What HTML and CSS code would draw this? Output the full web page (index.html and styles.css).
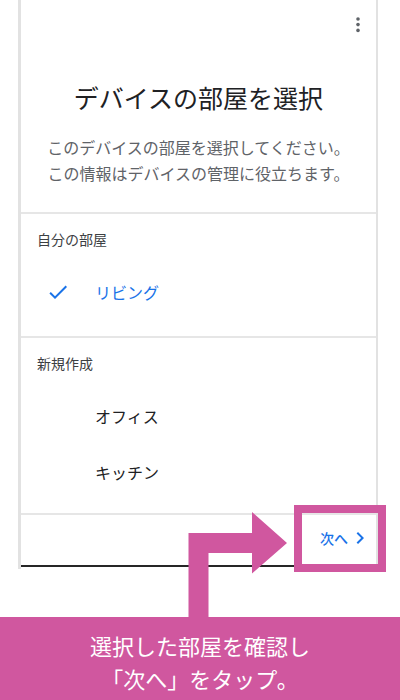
FILE: index.html
```html
<!DOCTYPE html>
<html lang="ja">
<head>
<meta charset="utf-8">
<link rel="stylesheet" href="styles.css">
</head>
<body>
<div class="frame">
  <header class="head">
    <div class="topbar">
      <svg class="kebab" width="6" height="18" viewBox="0 0 6 18"><circle cx="3" cy="3" r="1.8"/><circle cx="3" cy="8.6" r="1.8"/><circle cx="3" cy="14.4" r="1.8"/></svg>
    </div>
    <h1 class="title">デバイスの部屋を選択</h1>
    <p class="desc">このデバイスの部屋を選択してください。<br>この情報はデバイスの管理に役立ちます。</p>
  </header>
  <section class="group g1">
    <div class="label">自分の部屋</div>
    <div class="row selected">
      <svg class="check" width="24" height="24" viewBox="0 0 24 24"><path d="M9 16.17L4.83 12l-1.42 1.41L9 19 21 7l-1.41-1.41z"/></svg>
      <span>リビング</span>
    </div>
  </section>
  <section class="group g2">
    <div class="label">新規作成</div>
    <div class="row"><span class="item">オフィス</span></div>
    <div class="row"><span class="item">キッチン</span></div>
  </section>
  <footer class="foot">
    <span class="next">次へ<svg class="chev" width="24" height="24" viewBox="0 0 24 24"><path d="M10 6L8.59 7.41 13.17 12l-4.58 4.59L10 18l6-6z"/></svg></span>
  </footer>
</div>
<div class="note">選択した部屋を確認し<br>「次へ」をタップ。</div>
<svg class="arrow" width="110" height="120" viewBox="0 0 110 120"><polygon points="8.5,120 8.5,33 72,33 72,12 107,43 72,73.5 72,53 28.5,53 28.5,120"/></svg>
<div class="hl"></div>
</body>
</html>
```
FILE: styles.css
```css
* { box-sizing: border-box; }
html, body { margin: 0; padding: 0; }
body {
  width: 400px;
  height: 700px;
  overflow: hidden;
  position: relative;
  background: #fff;
  font-family: "Noto Sans CJK JP", "Noto Sans", sans-serif;
  color: #202124;
}
.frame {
  margin-left: 18px;
  width: 360px;
  border-left: 3px solid #e2e2e2;
  border-right: 2px solid #e2e2e2;
  padding-bottom: 2px;
}
.head {
  display: flex;
  flex-direction: column;
  align-items: center;
  height: 212px;
}
.topbar {
  align-self: stretch;
  display: flex;
  justify-content: flex-end;
  padding: 16px 15px 0 0;
  height: 34px;
}
.kebab { fill: #5f6368; }
.title {
  margin: 46px 0 0;
  font-size: 25px;
  line-height: 34px;
  font-weight: 400;
  color: #202124;
}
.desc {
  margin: 20px 0 0;
  font-size: 16px;
  line-height: 26px;
  text-align: center;
  color: #5f6368;
}
.group {
  border-top: 2px solid #e6e6e6;
  padding-top: 15px;
}
.g1 { padding-bottom: 16px; }
.g2 { padding-bottom: 13px; }
.label {
  padding-left: 16px;
  font-size: 14px;
  line-height: 20px;
  color: #3c4043;
  margin-bottom: 15px;
}
.row {
  height: 56px;
  display: flex;
  align-items: center;
  padding-left: 74px;
  font-size: 16px;
  color: #202124;
}
.row.selected {
  padding-left: 25px;
  gap: 25px;
  color: #1a73e8;
}
.check { fill: #1a73e8; }
.foot {
  border-top: 2px solid #e6e6e6;
  border-bottom: 2px solid #262626;
  height: 54px;
  display: flex;
  justify-content: flex-end;
  align-items: center;
  padding: 0 4px 4px 0;
}
.next {
  display: flex;
  align-items: center;
  font-size: 14px;
  font-weight: 500;
  color: #1a73e8;
}
.chev { fill: #1a73e8; }
.note {
  margin-top: 48px;
  height: 83px;
  background: #d0579f;
  color: #fff;
  font-size: 22px;
  line-height: 33px;
  text-align: center;
  padding-top: 12px;
}
.arrow {
  position: absolute;
  left: 180px;
  top: 500px;
  fill: #d0579f;
}
.hl {
  position: absolute;
  left: 294px;
  top: 505px;
  width: 92px;
  height: 67px;
  border: 8px solid #d0579f;
}
```
